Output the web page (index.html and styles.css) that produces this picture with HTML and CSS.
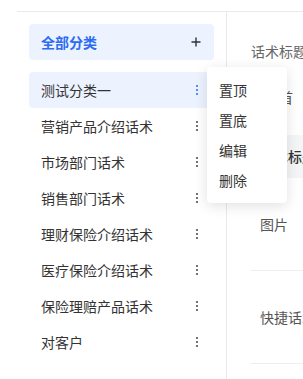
FILE: index.html
```html
<!DOCTYPE html>
<html lang="zh">
<head>
<meta charset="utf-8">
<link rel="stylesheet" href="styles.css">
</head>
<body>
<div class="page">
  <div class="frame">
    <aside class="sidebar">
      <div class="all-cat">
        <span>全部分类</span>
        <svg class="plus" width="10" height="10" viewBox="0 0 10 10"><path d="M5 0.5v9M0.5 5h9" stroke="#333" stroke-width="1.4" fill="none"/></svg>
      </div>
      <ul class="cat-list">
        <li class="cat active"><span>测试分类一</span><i class="more"><b></b><b></b><b></b></i></li>
        <li class="cat"><span>营销产品介绍话术</span><i class="more"><b></b><b></b><b></b></i></li>
        <li class="cat"><span>市场部门话术</span><i class="more"><b></b><b></b><b></b></i></li>
        <li class="cat"><span>销售部门话术</span><i class="more"><b></b><b></b><b></b></i></li>
        <li class="cat"><span>理财保险介绍话术</span><i class="more"><b></b><b></b><b></b></i></li>
        <li class="cat"><span>医疗保险介绍话术</span><i class="more"><b></b><b></b><b></b></i></li>
        <li class="cat"><span>保险理赔产品话术</span><i class="more"><b></b><b></b><b></b></i></li>
        <li class="cat"><span>对客户</span><i class="more"><b></b><b></b><b></b></i></li>
      </ul>
    </aside>
    <main class="content">
      <div class="field">话术标题</div>
      <div class="field field2">排序置首</div>
      <div class="thead">话术标题</div>
      <div class="trow">图片</div>
      <div class="trow">快捷话术</div>
    </main>
  </div>
  <div class="menu">
    <div class="menu-item">置顶</div>
    <div class="menu-item">置底</div>
    <div class="menu-item">编辑</div>
    <div class="menu-item">删除</div>
  </div>
</div>
</body>
</html>
```
FILE: styles.css
```css
html, body {
  margin: 0;
  padding: 0;
  background: #fff;
  overflow: hidden;
}
body {
  font-family: "Noto Sans CJK SC", "Noto Sans", sans-serif;
  font-size: 14px;
  color: #333;
}
.page {
  position: relative;
  width: 303px;
  height: 379px;
  overflow: hidden;
  padding-top: 11px;
  box-sizing: border-box;
}
.frame {
  margin-left: 17px;
  border-top: 1px solid #e9eaec;
  display: flex;
  height: 400px;
  white-space: nowrap;
}
.sidebar {
  flex: 0 0 210px;
  box-sizing: border-box;
  width: 211px;
  border-right: 1px solid #e9eaec;
  padding: 12px 12px 0 12px;
}
.all-cat {
  height: 36px;
  border-radius: 4px;
  background: #ecf2fe;
  display: flex;
  align-items: center;
  justify-content: space-between;
  padding: 0 13px 0 12px;
  color: #2c6bf2;
  font-weight: 700;
  line-height: 36px;
}
.plus {
  display: block;
}
.cat-list {
  list-style: none;
  margin: 12px 0 0 0;
  padding: 0;
}
.cat {
  height: 36px;
  border-radius: 4px;
  display: flex;
  align-items: center;
  justify-content: space-between;
  padding: 0 16px 0 12px;
  color: #333;
}
.cat.active {
  background: #ecf2fe;
}
.more {
  display: flex;
  flex-direction: column;
  gap: 2px;
  width: 2px;
}
.more b {
  display: block;
  width: 2px;
  height: 2px;
  background: #444;
  border-radius: 1px;
}
.cat.active .more b {
  background: #2c6bf2;
}
.content {
  flex: 1 1 auto;
  min-width: 0;
  position: relative;
}
.field {
  margin-top: 28px;
  padding-left: 24px;
  height: 22px;
  line-height: 22px;
  color: #666;
}
.field2 {
  margin-top: 24px;
  padding-left: 10px;
  color: #555;
}
.thead {
  margin-top: 27px;
  height: 43px;
  line-height: 43px;
  background: #f4f5f7;
  padding-left: 33px;
  color: #333;
  font-weight: 500;
}
.trow {
  margin-left: 24px;
  padding-left: 9px;
  height: 92px;
  line-height: 92px;
  border-bottom: 1px solid #eceef1;
  color: #555;
}
.menu {
  position: absolute;
  left: 207px;
  top: 67px;
  width: 80px;
  box-sizing: border-box;
  padding: 8px 0;
  background: #fff;
  border-radius: 4px;
  box-shadow: 0 3px 14px rgba(0, 0, 0, 0.12);
}
.menu-item {
  height: 30px;
  line-height: 30px;
  padding-left: 12px;
  color: #333;
}
```
